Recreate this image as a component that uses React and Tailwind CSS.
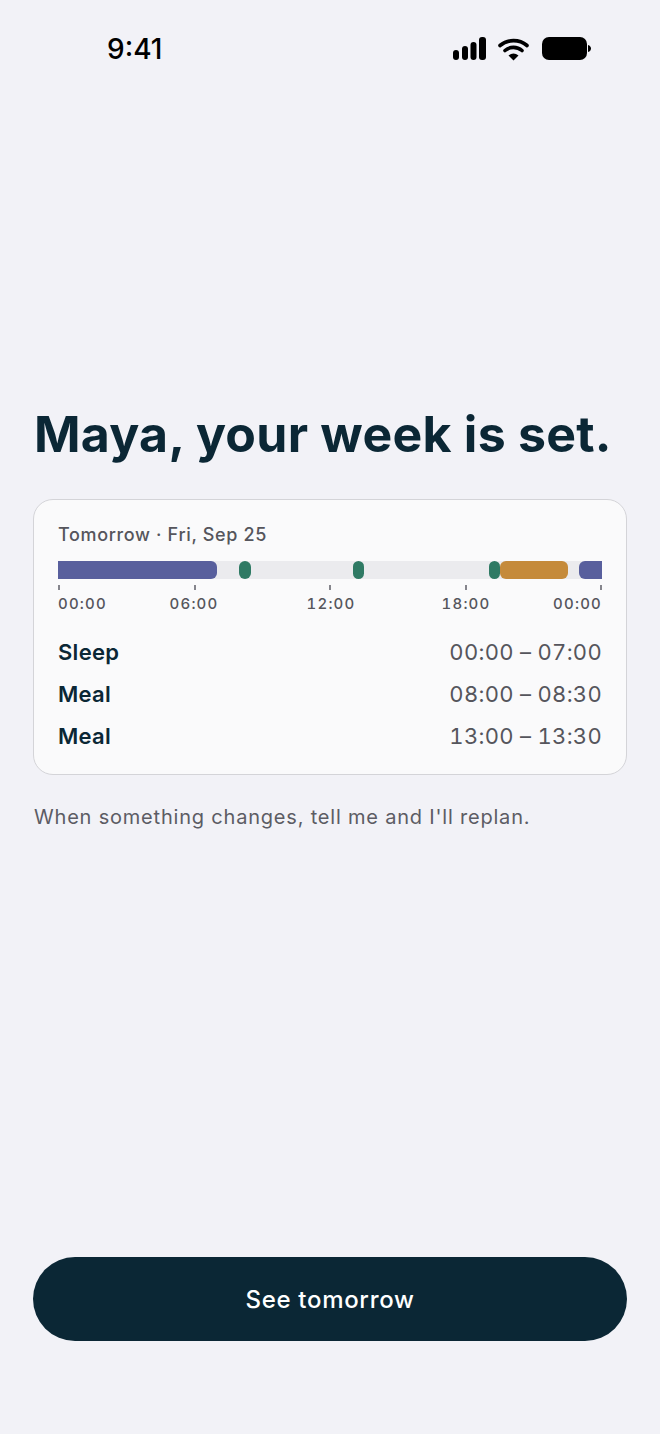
import React from 'react';

const BLOCKS = [
    { start: 0, end: 7, color: 'bg-[#585f9d]', round: 'rounded-r-md' },
    { start: 8, end: 8.5, color: 'bg-[#2f7a64]', round: 'rounded-md' },
    { start: 13, end: 13.5, color: 'bg-[#2f7a64]', round: 'rounded-md' },
    { start: 19, end: 19.5, color: 'bg-[#2f7a64]', round: 'rounded-md' },
    { start: 19.5, end: 22.5, color: 'bg-[#c58a3a]', round: 'rounded-md' },
    { start: 23, end: 24, color: 'bg-[#585f9d]', round: 'rounded-l-md' },
];

const ROWS = [
    { label: 'Sleep', time: '00:00 – 07:00' },
    { label: 'Meal', time: '08:00 – 08:30' },
    { label: 'Meal', time: '13:00 – 13:30' },
];

const LABELS = ['00:00', '06:00', '12:00', '18:00', '00:00'];

const StatusIcons = () => (
    <svg width="140" height="26" viewBox="0 0 140 26" fill="black">
        <rect x="1" y="14" width="6" height="10" rx="3" />
        <rect x="10" y="10" width="6" height="14" rx="3" />
        <rect x="18.500" y="6" width="6" height="18" rx="3" />
        <rect x="27" y="1" width="7" height="23" rx="3" />
        <path d="M48 9.500a21 21 0 0 1 27 0" fill="none" stroke="black" strokeWidth="3.600" strokeLinecap="round" />
        <path d="M53 14.500a13 13 0 0 1 17 0" fill="none" stroke="black" strokeWidth="3.600" strokeLinecap="round" />
        <path d="M56.500 19.500q5-4 10 0l-5 5z" />
        <rect x="90" y="1" width="45" height="23" rx="7" />
        <path d="M136 9c2 .5 3 2 3 3.500s-1 3-3 3.500z" />
    </svg>
);

const Timeline = () => (
    <div>
        <div className="relative h-[18px] bg-[#ebebee]">
            {BLOCKS.map((b) => (
                <div
                    key={b.start}
                    className={`absolute top-0 h-full ${b.color} ${b.round}`}
                    style={{ left: `${(b.start / 24) * 100}%`, width: `${((b.end - b.start) / 24) * 100}%` }}
                />
            ))}
        </div>
        <div className="flex justify-between mt-1.5 h-[5px]">
            {LABELS.map((l, i) => (
                <div key={i} className="w-[2px] h-full bg-[#85858c]" />
            ))}
        </div>
        <div className="grid grid-cols-[68px_1fr_1fr_1fr_68px] mt-1 text-[15px] leading-5 font-medium tabular-nums tracking-[1.2px] text-[#55555c]">
            <span className="text-left">00:00</span>
            <span className="text-center -mx-4">06:00</span>
            <span className="text-center pl-0.5">12:00</span>
            <span className="text-center -mx-4">18:00</span>
            <span className="text-right">00:00</span>
        </div>
    </div>
);

export default function App() {
    return (
        <div className="min-h-[1434px] bg-[#f2f2f7] flex flex-col font-['Inter',sans-serif]">
            <div className="flex items-center justify-between pl-[107px] pr-[68px] pt-[31px] h-[66px]">
                <span className="text-[28px] leading-9 font-medium text-black">9:41</span>
                <StatusIcons />
            </div>

            <main className="flex-1 flex flex-col px-[33px] pt-[335px]">
                <h1 className="text-[50px] leading-[66px] font-bold tracking-[0.25px] text-[#0b2735] pl-px whitespace-nowrap">
                    Maya, your week is set.
                </h1>

                <div className="mt-[32px] h-[276px] rounded-[20px] border border-[#d4d4d8] bg-[#fafafb] px-6 pt-[23px]">
                    <div className="text-[18px] leading-6 font-medium tracking-[0.65px] text-[#55555c]">Tomorrow · Fri, Sep 25</div>
                    <div className="mt-[14px]">
                        <Timeline />
                    </div>
                    <div className="mt-6 flex flex-col gap-[14px]">
                        {ROWS.map((r, i) => (
                            <div key={i} className="flex justify-between items-center h-7 text-[22px]">
                                <span className="font-semibold tracking-[0.3px] text-[#0b2735]">{r.label}</span>
                                <span className="tabular-nums tracking-[0.3px] text-[#55555c]">{r.time}</span>
                            </div>
                        ))}
                    </div>
                </div>

                <p className="mt-[28px] pl-px text-[20px] leading-7 tracking-[0.8px] text-[#5c5c64]">When something changes, tell me and I'll replan.</p>
            </main>

            <div className="px-[33px] pb-[93px]">
                <button className="w-full h-[84px] pt-px rounded-full bg-[#0b2735] text-white text-[24px] tracking-[0.7px] font-medium">See tomorrow</button>
            </div>
        </div>
    );
}
